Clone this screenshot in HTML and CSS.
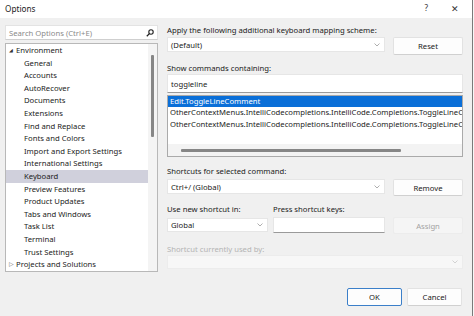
FILE: index.html
```html
<!DOCTYPE html>
<html lang="en">
<head>
  <meta charset="UTF-8">
  <title>Options</title>
  <link rel="stylesheet" href="styles.css">
</head>
<body>
  <div class="window">
    <div class="titlebar">
      <span class="title">Options</span>
      <span class="tb-btns">
        <span class="tb-help">?</span>
        <span class="tb-close">✕</span>
      </span>
    </div>

    <div class="main">
      <!-- linke Spalte: Suche + Baum -->
      <div class="left">
        <div class="search">
          <span class="placeholder">Search Options (Ctrl+E)</span>
          <svg class="search-icon" width="8" height="8" viewBox="0 0 8 8">
            <circle cx="5" cy="3" r="2.2" fill="none" stroke="#222" stroke-width="1.1"/>
            <line x1="3.4" y1="4.6" x2="0.8" y2="7.2" stroke="#222" stroke-width="1.3"/>
          </svg>
        </div>
        <div class="tree">
          <ul class="tree-list">
            <li class="node open"><span class="arrow">◢</span>Environment</li>
            <li class="child">General</li>
            <li class="child">Accounts</li>
            <li class="child">AutoRecover</li>
            <li class="child">Documents</li>
            <li class="child">Extensions</li>
            <li class="child">Find and Replace</li>
            <li class="child">Fonts and Colors</li>
            <li class="child">Import and Export Settings</li>
            <li class="child">International Settings</li>
            <li class="child selected">Keyboard</li>
            <li class="child">Preview Features</li>
            <li class="child">Product Updates</li>
            <li class="child">Tabs and Windows</li>
            <li class="child">Task List</li>
            <li class="child">Terminal</li>
            <li class="child">Trust Settings</li>
            <li class="node"><span class="arrow closed">▷</span>Projects and Solutions</li>
          </ul>
          <div class="vscroll"><div class="vthumb"></div></div>
        </div>
      </div>

      <!-- rechte Spalte: Tastatur-Einstellungen -->
      <div class="right">
        <div class="label l-apply">Apply the following additional keyboard mapping scheme:</div>
        <div class="row r-scheme">
          <div class="combo w-wide">(Default)<svg class="chev" width="6" height="4" viewBox="0 0 6 4"><polyline points="0.5,0.5 3,3 5.5,0.5" fill="none" stroke="#999" stroke-width="0.8"/></svg></div>
          <button class="btn">Reset</button>
        </div>

        <div class="label l-show">Show commands containing:</div>
        <div class="textbox tb-filter">toggleline</div>

        <div class="listbox">
          <div class="list-rows">
            <div class="list-row selected">Edit.ToggleLineComment</div>
            <div class="list-row">OtherContextMenus.IntelliCodecompletions.IntelliCode.Completions.ToggleLineComment</div>
            <div class="list-row">OtherContextMenus.IntelliCodecompletions.IntelliCode.Completions.ToggleLineComment</div>
          </div>
          <div class="hscroll"><div class="hthumb"></div></div>
        </div>

        <div class="label l-shortcuts">Shortcuts for selected command:</div>
        <div class="row r-shortcuts">
          <div class="combo w-wide">Ctrl+/ (Global)<svg class="chev" width="6" height="4" viewBox="0 0 6 4"><polyline points="0.5,0.5 3,3 5.5,0.5" fill="none" stroke="#999" stroke-width="0.8"/></svg></div>
          <button class="btn">Remove</button>
        </div>

        <div class="row r-labels">
          <div class="label w-scope">Use new shortcut in:</div>
          <div class="label">Press shortcut keys:</div>
        </div>
        <div class="row r-new">
          <div class="combo w-scope">Global<svg class="chev" width="6" height="4" viewBox="0 0 6 4"><polyline points="0.5,0.5 3,3 5.5,0.5" fill="none" stroke="#999" stroke-width="0.8"/></svg></div>
          <div class="textbox tb-keys"></div>
          <button class="btn disabled">Assign</button>
        </div>

        <div class="label disabled-text l-used">Shortcut currently used by:</div>
        <div class="combo disabled-combo"><svg class="chev" width="6" height="4" viewBox="0 0 6 4"><polyline points="0.5,0.5 3,3 5.5,0.5" fill="none" stroke="#c8c8c8" stroke-width="0.8"/></svg></div>
      </div>
    </div>

    <div class="footer">
      <button class="btn btn-foot default">OK</button>
      <button class="btn btn-foot">Cancel</button>
    </div>
  </div>
</body>
</html>
```

FILE: styles.css
```css
  body {
    margin: 0;
    background: #f7f7f7;
    font-family: 'Noto Sans', 'Open Sans', sans-serif;
    font-size: 7.7px;
    color: #1b1b1b;
  }
  .window {
    width: 472px;
    height: 316px;
    background: #f0f0f0;
    border-right: 1px solid #7a7a7a;
    overflow: hidden;
  }
  .titlebar {
    height: 18px;
    background: #fff;
    display: flex;
    align-items: center;
    justify-content: space-between;
    padding: 0 13px 2px 5px;
    box-sizing: border-box;
  }
  .title {
    font-size: 8.2px;
    color: #222;
  }
  .tb-btns {
    display: flex;
    gap: 23px;
    font-size: 8.2px;
    color: #333;
  }
  .tb-close { font-size: 9px; }

  .main {
    display: flex;
    gap: 9px;
    height: 254px;
    padding: 7px 0 0 5px;
    box-sizing: border-box;
  }

  /* links */
  .left {
    width: 153px;
    display: flex;
    flex-direction: column;
    gap: 3px;
  }
  .search {
    height: 15px;
    background: #fff;
    border: 1px solid #e3e3e3;
    border-bottom-color: #cfcfcf;
    box-sizing: border-box;
    display: flex;
    align-items: center;
    justify-content: space-between;
    padding: 0 3px 0 3px;
  }
  .placeholder { color: #8a8a8a; }
  .search-icon { display: block; }
  .tree {
    height: 229px;
    background: #fff;
    border: 1px solid #b8b8b8;
    box-sizing: border-box;
    display: flex;
  }
  .tree-list {
    list-style: none;
    margin: 0;
    padding: 0;
    flex: 1;
  }
  .tree-list li {
    height: 12.6px;
    line-height: 12.6px;
    white-space: nowrap;
    padding-left: 10px;
  }
  .tree-list li.child { padding-left: 18px; }
  .tree-list li.selected { background: #d0d0dc; }
  .arrow {
    display: inline-block;
    width: 6px;
    margin-left: -7px;
    margin-right: 1px;
    font-size: 5px;
    vertical-align: 1px;
    color: #333;
  }
  .arrow.closed { font-size: 6px; color: #666; }
  .vscroll {
    width: 9px;
    background: #f4f4f4;
    display: flex;
    justify-content: center;
    padding-top: 11px;
  }
  .vthumb {
    width: 3px;
    height: 82px;
    background: #868686;
    border-radius: 1px;
  }

  /* rechts */
  .right {
    width: 296px;
    display: flex;
    flex-direction: column;
  }
  .label {
    height: 10px;
    line-height: 10px;
    white-space: nowrap;
  }
  .row {
    display: flex;
    gap: 8px;
    align-items: flex-start;
  }
  .combo, .textbox {
    background: #fff;
    border: 1px solid #e6e6e6;
    box-sizing: border-box;
    display: flex;
    align-items: center;
    justify-content: space-between;
    padding: 0 4px 0 3px;
    white-space: nowrap;
  }
  .combo { height: 15px; }
  .w-wide { width: 218px; }
  .w-scope { width: 101px; }
  .chev { display: block; }
  .textbox { border-bottom-color: #9a9a9a; }
  .btn {
    font-family: inherit;
    font-size: 7.7px;
    color: #1b1b1b;
    width: 70px;
    height: 18px;
    background: #fdfdfd;
    border: 1px solid #e2e2e2;
    border-bottom-color: #d0d0d0;
    border-radius: 2px;
    padding: 0;
    box-sizing: border-box;
  }
  .btn.disabled {
    background: #f5f5f5;
    border-color: #ececec;
    color: #a3a3a3;
    height: 17px;
  }

  .l-apply { margin-top: 0; }
  .r-scheme { margin-top: 2px; }
  .l-show { margin-top: 8px; }
  .tb-filter { height: 19px; margin-top: 1px; }
  .listbox {
    margin-top: 2px;
    height: 62px;
    background: #fff;
    border: 1px solid #aaa;
    box-sizing: border-box;
    display: flex;
    flex-direction: column;
    overflow: hidden;
  }
  .list-rows { flex: 1; }
  .list-row {
    height: 11.4px;
    line-height: 11.4px;
    padding-left: 2px;
    white-space: nowrap;
    overflow: hidden;
  }
  .list-row.selected {
    background: #0a6fd8;
    color: #fff;
  }
  .hscroll {
    height: 12px;
    background: #f3f3f3;
    display: flex;
    align-items: center;
    padding-left: 13px;
  }
  .hthumb {
    width: 220px;
    height: 3px;
    background: #868686;
    border-radius: 1px;
  }
  .l-shortcuts { margin-top: 9px; }
  .r-shortcuts { margin-top: 3px; }
  .r-shortcuts .btn { height: 17px; }
  .r-labels { margin-top: 8px; gap: 5px; }
  .r-new { margin-top: 3px; gap: 5px; }
  .r-new .combo { margin-top: 1px; height: 14px; }
  .tb-keys { width: 112px; height: 16px; }
  .r-new .btn { margin-left: 3px; }
  .disabled-text { color: #b4b4b4; }
  .l-used { margin-top: 10px; }
  .disabled-combo {
    margin-top: 1px;
    height: 14px;
    width: 296px;
    background: #f7f7f7;
    border-color: #ececec;
    justify-content: flex-end;
  }

  .footer {
    display: flex;
    justify-content: flex-end;
    gap: 5px;
    padding: 16px 10px 0 0;
  }
  .btn-foot { width: 55px; height: 18px; }
  .btn-foot.default { border: 1px solid #3b7fc9; }
```
